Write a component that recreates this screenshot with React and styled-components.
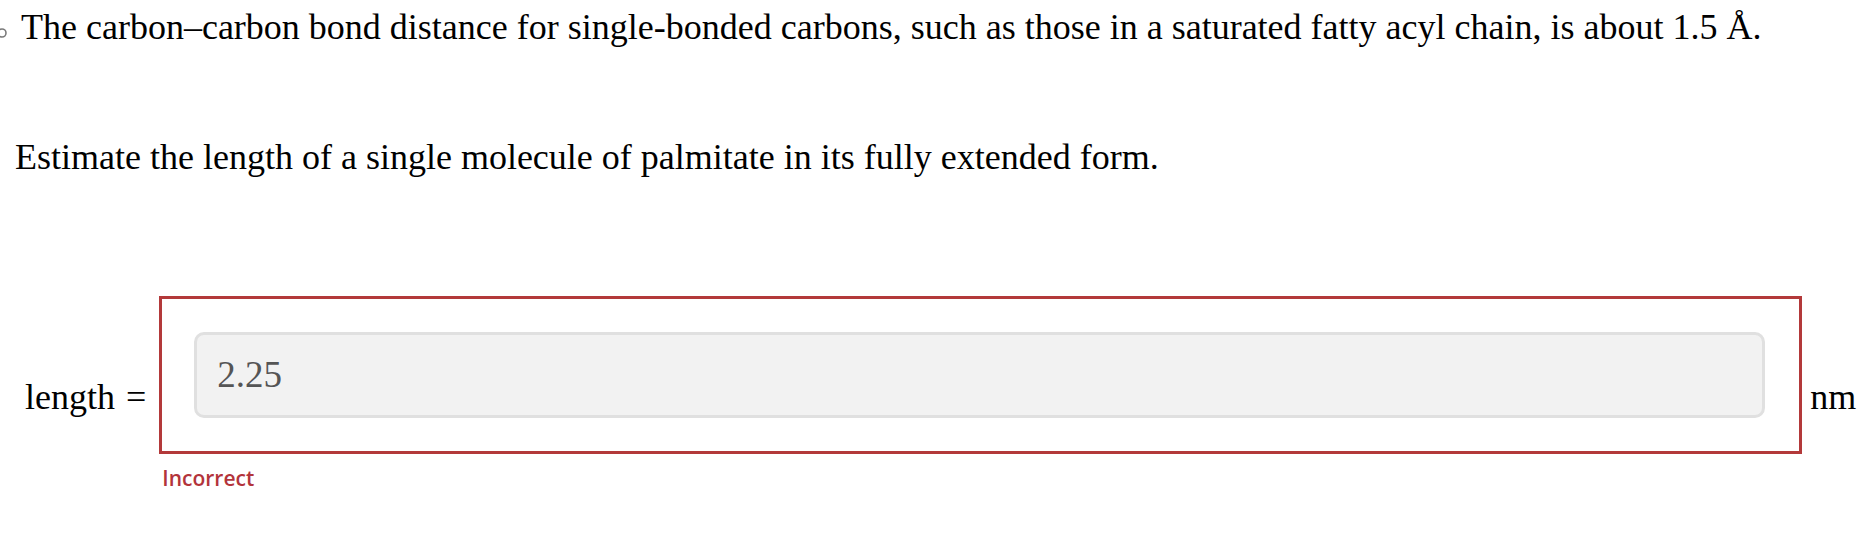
import React from 'react';
import styled, { createGlobalStyle } from 'styled-components';

const GlobalStyle = createGlobalStyle`
  body {
    margin: 0;
    background: #fff;
    font-family: "Liberation Serif", "Times New Roman", serif;
    color: #000;
  }
`;

const Page = styled.div`
  width: 1876px;
  height: 556px;
  overflow: hidden;
`;

const Statement = styled.p`
  margin: 0;
  padding-top: ${p => p.$top}px;
  padding-left: ${p => p.$left}px;
  font-size: 36px;
  line-height: 41px;
`;

const Bullet = styled.svg`
  position: absolute;
  left: 0;
  top: 27px;
`;

const AnswerRow = styled.div`
  display: flex;
  align-items: flex-start;
  margin-top: 118px;
  padding-left: 25px;
`;

const MathLabel = styled.span`
  font-size: 36px;
  line-height: 41px;
  margin-top: 81px;
  margin-left: ${p => p.$gap || 0}px;
  margin-right: ${p => p.$after || 0}px;
  white-space: nowrap;
`;

const Rel = styled.span`
  margin-left: 11px;
`;

const FieldColumn = styled.div`
  width: 1643px;
  display: flex;
  flex-direction: column;
`;

const FieldFrame = styled.div`
  border: 3px solid #b3393a;
  padding: 33px 34px 33px 32px;
`;

const Input = styled.input`
  box-sizing: border-box;
  width: 100%;
  height: 86px;
  border: 3px solid #e0e0e0;
  border-radius: 10px;
  background: #f2f2f2;
  padding: 0 20px 2px;
  font-family: "Liberation Serif", "Times New Roman", serif;
  font-size: 37px;
  color: #555;
  outline: none;
`;

const Feedback = styled.div`
  margin-top: 10px;
  padding-left: 3px;
  font-family: "Open Sans", "Liberation Sans", sans-serif;
  font-weight: 600;
  font-size: 21px;
  color: #b3343b;
`;

export default function App() {
  return (
    <Page>
      <GlobalStyle />
      <Bullet width="10" height="14" viewBox="0 0 10 14">
        <circle cx="2" cy="6" r="4" fill="none" stroke="#7a7a7a" strokeWidth="1.6" />
      </Bullet>
      <Statement $top={7} $left={21}>
        The carbon–carbon bond distance for single-bonded carbons, such as those in a saturated fatty acyl chain, is about 1.5 Å.
      </Statement>
      <Statement $top={89} $left={15}>
        Estimate the length of a single molecule of palmitate in its fully extended form.
      </Statement>
      <AnswerRow>
        <MathLabel $after={13}>
          length<Rel>=</Rel>
        </MathLabel>
        <FieldColumn>
          <FieldFrame>
            <Input readOnly defaultValue="2.25" />
          </FieldFrame>
          <Feedback>Incorrect</Feedback>
        </FieldColumn>
        <MathLabel $gap={8}>nm</MathLabel>
      </AnswerRow>
    </Page>
  );
}
